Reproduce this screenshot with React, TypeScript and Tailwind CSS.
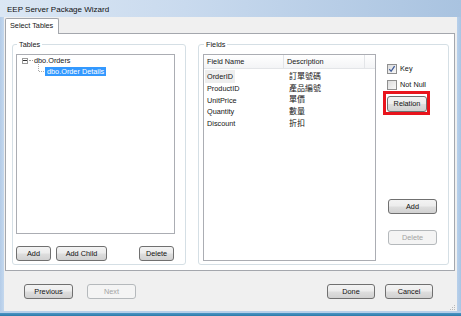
import React from "react";

const btn =
  "flex items-center justify-center rounded-[3px] border border-[#707070] bg-[linear-gradient(to_bottom,#f3f3f3_0%,#ececec_48%,#dedede_52%,#d1d1d1_100%)] text-[7.3px] leading-none text-[#111]";
const btnDis =
  "flex items-center justify-center rounded-[3px] border border-[#b5b9bc] bg-[#f4f4f4] text-[7.3px] leading-none text-[#a3a3a3]";

function CheckBox({ checked }: { checked: boolean }) {
  return (
    <div className="w-[10px] h-[10px] border border-[#8f8f8f] bg-[linear-gradient(135deg,#dcdcdc,#f8f8f8)] flex items-center justify-center">
      {checked && (
        <svg width="8" height="8" viewBox="0 0 8 8">
          <path d="M1.3 4.2 L3.1 6.3 L6.6 1.2" fill="none" stroke="#3d5a9a" strokeWidth="1.3" />
        </svg>
      )}
    </div>
  );
}

export default function App() {
  const rows: [string, string][] = [
    ["OrderID", "訂單號碼"],
    ["ProductID", "產品編號"],
    ["UnitPrice", "單價"],
    ["Quantity", "數量"],
    ["Discount", "折扣"],
  ];
  return (
    <div className="w-[461px] h-[316px] overflow-hidden flex flex-col font-['Liberation_Sans','Noto_Sans_CJK_TC',sans-serif] text-[7.3px] text-[#161616] leading-none">
      {/* title bar */}
      <div className="h-[17px] flex items-center pl-[7px] pt-[2px] text-[8px] text-[#111] bg-[linear-gradient(to_right,#dbe7f4_0%,#c9daee_40%,#a9c3e0_100%)]">
        EEP Server Package Wizard
      </div>
      <div className="flex h-[294px]">
        <div className="w-[4px] bg-[linear-gradient(to_right,#b4cce8,#c4d8ee)]" />
        {/* client */}
        <div className="w-[453px] bg-[#f0f0f0] flex flex-col relative">
          {/* tab strip */}
          <div className="h-[15px] mt-[1px] flex pl-[1px]">
            <div className="relative z-10 w-[54px] h-[16px] border-t border-l border-r border-[#a4a7ad] rounded-t-[2px] bg-white flex items-center pl-[4px] pb-[1px]">
              Select Tables
            </div>
          </div>
          {/* tab panel */}
          <div className="ml-[1px] w-[450px] h-[238px] border border-[#a4a7ad] bg-white flex pl-[6px] pt-[10px] gap-[12px]">
            {/* Tables group */}
            <div className="relative w-[174px] h-[221px] border border-[#d5dfe5] rounded-[3px] flex flex-col pl-[3px] pt-[9px]">
              <div className="absolute -top-[4px] left-[4px] px-[2px] bg-white">Tables</div>
              <div className="w-[159px] h-[180px] border border-[#abadb3] bg-white flex flex-col pt-[1px]">
                <div className="h-[9px] flex items-center pl-[5px]">
                  <div className="w-[6px] h-[6px] border border-[#9a9a9a] flex items-center justify-center bg-white">
                    <div className="w-[4px] h-px bg-[#333]" />
                  </div>
                  <div className="w-[4px] border-t border-dotted border-[#a0a0a0] ml-[1px]" />
                  <span className="ml-px">dbo.Orders</span>
                </div>
                <div className="h-[9px] mt-[2px] flex items-center pl-[21px]">
                  <svg width="7" height="9" className="overflow-visible">
                    <path d="M0.5 -3 V4.5 H7" fill="none" stroke="#a9a9a9" strokeWidth="1" strokeDasharray="1 1" />
                  </svg>
                  <span className="h-[9px] flex items-center bg-[#3399ff] text-white px-[2px]">dbo.Order Details</span>
                </div>
              </div>
              <div className="flex mt-[12px]">
                <div className={btn + " w-[35px] h-[15px]"}>Add</div>
                <div className={btn + " w-[51px] h-[15px] ml-[5px]"}>Add Child</div>
                <div className={btn + " w-[35px] h-[15px] ml-[32px]"}>Delete</div>
              </div>
            </div>
            {/* Fields group */}
            <div className="relative w-[251px] h-[221px] border border-[#d5dfe5] rounded-[3px] flex pl-[4px] pt-[9px]">
              <div className="absolute -top-[4px] left-[5px] px-[2px] bg-white">Fields</div>
              <div className="w-[173px] h-[207px] border border-[#abadb3] bg-white flex flex-col">
                <div className="h-[14px] flex border-b border-[#e3e5e8] bg-[linear-gradient(to_bottom,#ffffff,#f3f4f6)]">
                  <div className="w-[80px] border-r border-[#e3e5e8] flex items-center pl-[3px]">Field Name</div>
                  <div className="w-[81px] border-r border-[#e3e5e8] flex items-center pl-[3px]">Description</div>
                  <div className="flex-1" />
                </div>
                <div className="flex flex-col mt-[2px]">
                  {rows.map(([a, b], i) => (
                    <div key={a} className="h-[11.7px] flex items-center">
                      <div className="w-[81px] pl-px">
                        <span className={"px-[2px] py-[2px] " + (i === 0 ? "bg-[#eeeeee]" : "")}>{a}</span>
                      </div>
                      <div className="pl-[4px] text-[8px]">{b}</div>
                    </div>
                  ))}
                </div>
              </div>
              {/* right controls */}
              <div className="flex flex-col ml-[7px] pt-[10px]">
                <div className="flex items-center h-[10px] pl-[4px]">
                  <CheckBox checked />
                  <span className="ml-[3px]">Key</span>
                </div>
                <div className="flex items-center h-[10px] pl-[4px] mt-[6px]">
                  <CheckBox checked={false} />
                  <span className="ml-[3px]">Not Null</span>
                </div>
                <div className="w-[47px] h-[24px] border-[3px] border-[#e8141c] mt-[1px] pl-px pt-[2px]">
                  <div className={btn + " w-[40px] h-[16px]"}>Relation</div>
                </div>
                <div className={btn + " w-[49px] h-[15px] ml-[5px] mt-[84px]"}>Add</div>
                <div className={btnDis + " w-[49px] h-[15px] ml-[5px] mt-[16px]"}>Delete</div>
              </div>
            </div>
          </div>
          {/* bottom buttons */}
          <div className="flex mt-[13px] pl-[20px]">
            <div className={btn + " w-[49px] h-[15px]"}>Previous</div>
            <div className={btnDis + " w-[49px] h-[15px] ml-[14px]"}>Next</div>
            <div className={btn + " w-[48px] h-[15px] ml-[191px]"}>Done</div>
            <div className={btn + " w-[48px] h-[15px] ml-[10px]"}>Cancel</div>
          </div>
          {/* grip */}
          <div className="absolute right-[2px] bottom-[1px] flex flex-col items-end gap-px">
            <div className="w-px h-px bg-[#b8b8b8]" />
            <div className="flex gap-px"><div className="w-px h-px bg-[#b8b8b8]" /><div className="w-px h-px bg-[#b8b8b8]" /></div>
            <div className="flex gap-px"><div className="w-px h-px bg-[#b8b8b8]" /><div className="w-px h-px bg-[#b8b8b8]" /><div className="w-px h-px bg-[#b8b8b8]" /></div>
          </div>
        </div>
        <div className="w-[4px] bg-[linear-gradient(to_right,#b8d0ea,#a9c5e4)]" />
      </div>
      <div className="h-[5px] flex flex-col">
        <div className="h-[2px] bg-[#b7cfe9]" />
        <div className="h-[3px] bg-[linear-gradient(to_bottom,#4d95c4,#2a7aa9)]" />
      </div>
    </div>
  );
}
